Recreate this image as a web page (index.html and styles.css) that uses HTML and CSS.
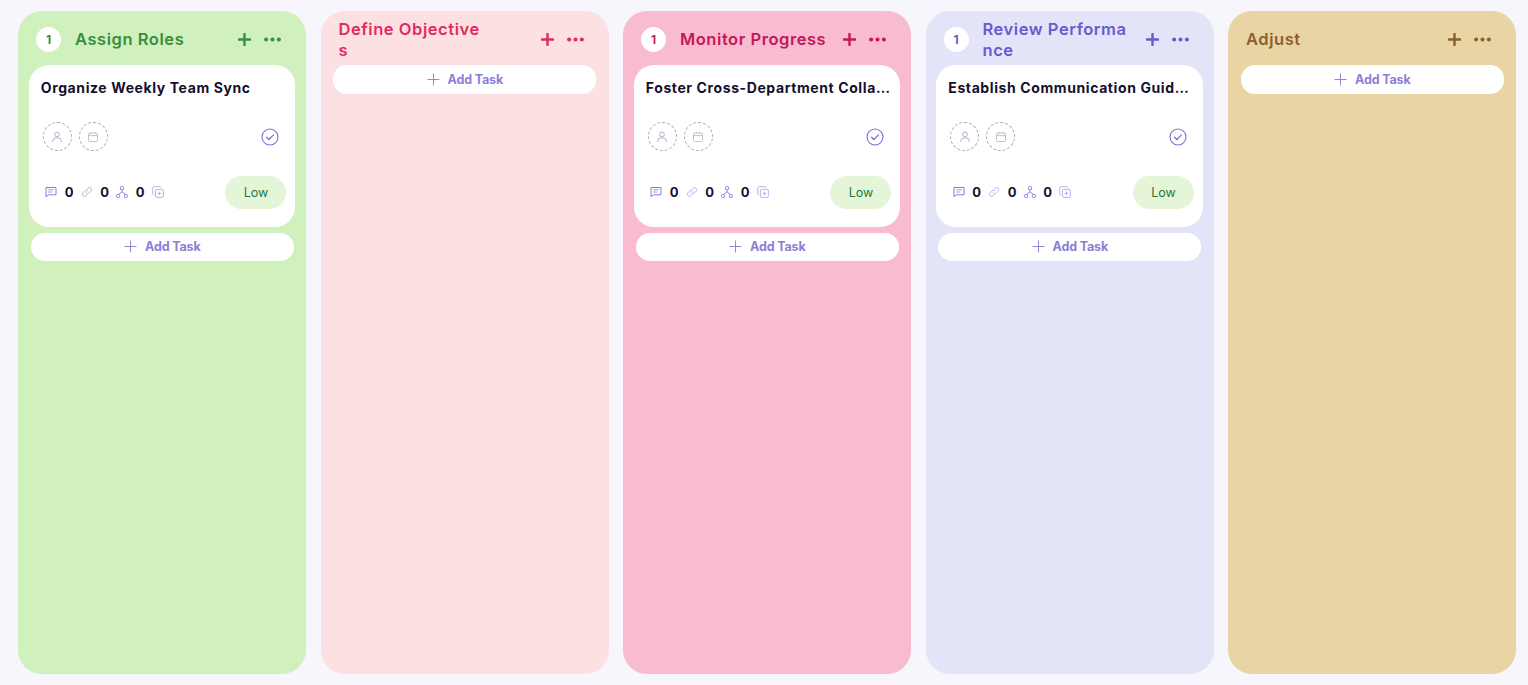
FILE: index.html
```html
<!DOCTYPE html>
<html lang="en">
<head>
<meta charset="utf-8">
<title>Board</title>
<link rel="stylesheet" href="styles.css">
</head>
<body>
<svg class="sprite" width="0" height="0" aria-hidden="true">
  <defs>
    <symbol id="i-plus" viewBox="0 0 14 14"><path d="M7 1v12M1 7h12" fill="none" stroke="currentColor" stroke-linecap="round"/></symbol>
    <symbol id="i-dots" viewBox="0 0 16 4"><circle cx="2" cy="2" r="1.9" fill="currentColor"/><circle cx="8" cy="2" r="1.9" fill="currentColor"/><circle cx="14" cy="2" r="1.9" fill="currentColor"/></symbol>
    <symbol id="i-user" viewBox="0 0 12 12"><circle cx="6" cy="3.4" r="2.4" fill="none" stroke="currentColor"/><path d="M1.8 11v-1.2A2.8 2.8 0 0 1 4.6 7h2.8a2.8 2.8 0 0 1 2.8 2.8V11" fill="none" stroke="currentColor"/></symbol>
    <symbol id="i-cal" viewBox="0 0 12 12"><rect x="1.5" y="2" width="9" height="8.5" rx="1" fill="none" stroke="currentColor" stroke-width=".8"/><path d="M1.5 4.6h9M4 1v2M8 1v2" fill="none" stroke="currentColor" stroke-width=".8"/></symbol>
    <symbol id="i-check" viewBox="0 0 18 18"><circle cx="9" cy="9" r="8" fill="none" stroke="currentColor" stroke-width="1.1"/><path d="M5.6 9.3l2.3 2.2 4.6-4.6" fill="none" stroke="currentColor" stroke-width="1.3" stroke-linecap="round" stroke-linejoin="round"/></symbol>
    <symbol id="i-comment" viewBox="0 0 12 12"><path d="M1 1.5h10v7.3H3.2L1 11z" fill="none" stroke="currentColor" stroke-linejoin="round"/><path d="M3.2 3.8h5.6M3.2 6h3.8" fill="none" stroke="currentColor" stroke-width=".8"/></symbol>
    <symbol id="i-link" viewBox="0 0 12 12"><path d="M5 7a2 2 0 0 0 3 .2l2-2a2.1 2.1 0 0 0-3-3l-.9.9M7 5a2 2 0 0 0-3-.2l-2 2a2.1 2.1 0 0 0 3 3l.9-.9" fill="none" stroke="currentColor" stroke-width=".9" stroke-linecap="round"/></symbol>
    <symbol id="i-tree" viewBox="0 0 12 12"><rect x="4.5" y=".7" width="3" height="3" rx=".6" fill="none" stroke="currentColor" stroke-width=".9"/><rect x=".7" y="8.6" width="2.8" height="2.8" rx=".6" fill="none" stroke="currentColor" stroke-width=".9"/><rect x="8.5" y="8.6" width="2.8" height="2.8" rx=".6" fill="none" stroke="currentColor" stroke-width=".9"/><path d="M6 3.7v2.2M6 5.9L2.2 8.6M6 5.9l3.8 2.7" fill="none" stroke="currentColor" stroke-width=".9"/></symbol>
    <symbol id="i-copy" viewBox="0 0 12 12"><rect x="3.4" y="3.4" width="8" height="8" rx="1.5" fill="none" stroke="currentColor" stroke-width=".9"/><path d="M9 1.8A1.4 1.4 0 0 0 7.8.7H2.2A1.5 1.5 0 0 0 .7 2.2v5.6A1.4 1.4 0 0 0 1.8 9M7.4 5.6v3.6M5.6 7.4h3.6" fill="none" stroke="currentColor" stroke-width=".9"/></symbol>
  </defs>
</svg>
<main class="board">
  <section class="col col-green">
    <header class="head">
      <span class="count">1</span>
      <h2 class="title">Assign Roles</h2>
      <div class="actions"><svg class="plus"><use href="#i-plus"/></svg><svg class="dots"><use href="#i-dots"/></svg></div>
    </header>
    <article class="card">
      <h3 class="card-title">Organize Weekly Team Sync</h3>
      <div class="card-mid">
        <span class="slot"><svg class="slot-ic"><use href="#i-user"/></svg></span>
        <span class="slot"><svg class="slot-ic"><use href="#i-cal"/></svg></span>
        <svg class="check"><use href="#i-check"/></svg>
      </div>
      <div class="card-foot">
        <svg class="mi"><use href="#i-comment"/></svg><b class="num">0</b>
        <svg class="mi mi-soft"><use href="#i-link"/></svg><b class="num">0</b>
        <svg class="mi"><use href="#i-tree"/></svg><b class="num">0</b>
        <svg class="mi mi-soft"><use href="#i-copy"/></svg>
        <span class="pill">Low</span>
      </div>
    </article>
    <button class="add"><svg class="add-ic"><use href="#i-plus"/></svg>Add Task</button>
  </section>

  <section class="col col-blush">
    <header class="head">
      <h2 class="title">Define Objective<br>s</h2>
      <div class="actions"><svg class="plus"><use href="#i-plus"/></svg><svg class="dots"><use href="#i-dots"/></svg></div>
    </header>
    <button class="add add-first"><svg class="add-ic"><use href="#i-plus"/></svg>Add Task</button>
  </section>

  <section class="col col-rose">
    <header class="head">
      <span class="count">1</span>
      <h2 class="title">Monitor Progress</h2>
      <div class="actions"><svg class="plus"><use href="#i-plus"/></svg><svg class="dots"><use href="#i-dots"/></svg></div>
    </header>
    <article class="card">
      <h3 class="card-title">Foster Cross-Department Collaboration</h3>
      <div class="card-mid">
        <span class="slot"><svg class="slot-ic"><use href="#i-user"/></svg></span>
        <span class="slot"><svg class="slot-ic"><use href="#i-cal"/></svg></span>
        <svg class="check"><use href="#i-check"/></svg>
      </div>
      <div class="card-foot">
        <svg class="mi"><use href="#i-comment"/></svg><b class="num">0</b>
        <svg class="mi mi-soft"><use href="#i-link"/></svg><b class="num">0</b>
        <svg class="mi"><use href="#i-tree"/></svg><b class="num">0</b>
        <svg class="mi mi-soft"><use href="#i-copy"/></svg>
        <span class="pill">Low</span>
      </div>
    </article>
    <button class="add"><svg class="add-ic"><use href="#i-plus"/></svg>Add Task</button>
  </section>

  <section class="col col-lav">
    <header class="head">
      <span class="count">1</span>
      <h2 class="title">Review Performa<br>nce</h2>
      <div class="actions"><svg class="plus"><use href="#i-plus"/></svg><svg class="dots"><use href="#i-dots"/></svg></div>
    </header>
    <article class="card">
      <h3 class="card-title">Establish Communication Guidelines</h3>
      <div class="card-mid">
        <span class="slot"><svg class="slot-ic"><use href="#i-user"/></svg></span>
        <span class="slot"><svg class="slot-ic"><use href="#i-cal"/></svg></span>
        <svg class="check"><use href="#i-check"/></svg>
      </div>
      <div class="card-foot">
        <svg class="mi"><use href="#i-comment"/></svg><b class="num">0</b>
        <svg class="mi mi-soft"><use href="#i-link"/></svg><b class="num">0</b>
        <svg class="mi"><use href="#i-tree"/></svg><b class="num">0</b>
        <svg class="mi mi-soft"><use href="#i-copy"/></svg>
        <span class="pill">Low</span>
      </div>
    </article>
    <button class="add"><svg class="add-ic"><use href="#i-plus"/></svg>Add Task</button>
  </section>

  <section class="col col-tan">
    <header class="head">
      <h2 class="title">Adjust</h2>
      <div class="actions"><svg class="plus"><use href="#i-plus"/></svg><svg class="dots"><use href="#i-dots"/></svg></div>
    </header>
    <button class="add add-first"><svg class="add-ic"><use href="#i-plus"/></svg>Add Task</button>
  </section>
</main>
</body>
</html>
```
FILE: styles.css
```css
* { box-sizing: border-box; }
html, body { height: 100%; }
body {
  margin: 0;
  background: #f6f6fc;
  font-family: "Inter", "Liberation Sans", sans-serif;
  overflow: hidden;
}
.sprite { position: absolute; }
.board {
  display: grid;
  grid-template-columns: repeat(5, 288px);
  column-gap: 14.5px;
  height: 685px;
  padding: 11px 0 11px 18px;
}
.col {
  border-radius: 24px;
  color: var(--accent);
  display: flex;
  flex-direction: column;
  align-items: flex-start;
}
.col-green { background: #d0f0bd; --accent: #388e3c; }
.col-blush { background: #fde0e1; --accent: #dd2c64; }
.col-rose { background: #f8bbd0; --accent: #c2185b; }
.col-lav { background: #e4e4f9; --accent: #6a5acd; }
.col-tan { background: #e8d5a3; --accent: #8b5e34; }

.head {
  display: flex;
  align-items: center;
  width: 100%;
  height: 54px;
  padding: 3px 25px 0 18px;
}
.count {
  flex: none;
  width: 25px;
  height: 25px;
  margin-right: 14px;
  border-radius: 50%;
  background: #fff;
  font-size: 12px;
  font-weight: 700;
  line-height: 25px;
  text-align: center;
}
.title {
  margin: 0;
  font-size: 16.5px;
  font-weight: 600;
  line-height: 21px;
  letter-spacing: .55px;
  white-space: nowrap;
}
.actions {
  display: flex;
  align-items: center;
  gap: 13px;
  margin-left: auto;
}
.plus { width: 13px; height: 13px; stroke-width: 2.6; }
.dots { width: 17px; height: 5px; }

.card {
  width: 266.7px;
  height: 162px;
  margin-left: 10.8px;
  padding: 13px 9px 0 12px;
  background: #fff;
  border-radius: 20px;
}
.card-title {
  margin: 0;
  color: #150f2e;
  font-size: 14px;
  font-weight: 700;
  line-height: 20px;
  letter-spacing: .6px;
  white-space: nowrap;
  overflow: hidden;
  text-overflow: ellipsis;
}
.card-mid {
  display: flex;
  align-items: center;
  gap: 7px;
  height: 29px;
  margin-top: 24px;
  padding: 0 7px 0 2px;
}
.slot {
  display: flex;
  align-items: center;
  justify-content: center;
  width: 29px;
  height: 29px;
  border: 1px dashed #a9a6bd;
  border-radius: 50%;
  color: #b4b1c6;
}
.slot-ic { width: 12px; height: 12px; }
.check { width: 18px; height: 18px; margin-left: auto; color: #7c6fd6; }
.card-foot {
  display: flex;
  align-items: center;
  height: 33px;
  margin-top: 25px;
  padding-left: 4.5px;
}
.mi { flex: none; width: 12px; height: 12px; margin-bottom: 2px; color: #8a7bdb; }
.mi-soft { color: #b3a9e8; }
.num {
  width: 23.5px;
  margin-bottom: 2px;
  color: #150f2e;
  font-size: 13px;
  font-weight: 700;
  text-align: center;
}
.pill {
  width: 61px;
  height: 33px;
  margin-left: auto;
  border-radius: 17px;
  background: #e4f5d8;
  color: #1b7a3e;
  font-size: 12.5px;
  line-height: 33px;
  text-align: center;
}
.add {
  display: flex;
  align-items: center;
  justify-content: center;
  gap: 8px;
  width: 263px;
  height: 28px;
  margin: 6px 0 0 12.8px;
  padding: 0 0 1px;
  border: 0;
  border-radius: 14px;
  background: #fff;
  color: #8a7fd6;
  font: 700 12.5px "Inter", "Liberation Sans", sans-serif;
  letter-spacing: -.15px;
}
.add-first { height: 29px; margin-top: 0; }
.add-ic { width: 13px; height: 13px; stroke-width: 1; }
```
